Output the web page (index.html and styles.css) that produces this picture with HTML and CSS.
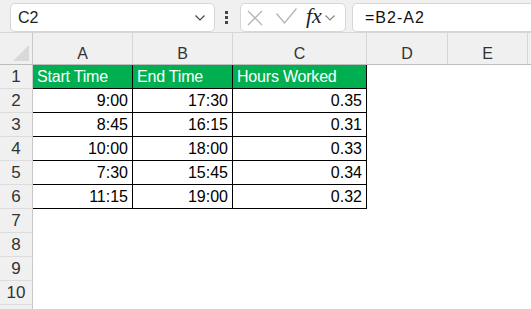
FILE: index.html
```html
<!DOCTYPE html>
<html lang="en">
<head>
    <meta charset="UTF-8">
    <title>Hours Worked</title>
    <link rel="stylesheet" href="styles.css">
</head>
<body>

    <!-- Name box and formula bar -->
    <div class="toolbar">
        <div class="namebox">
            <span>C2</span>
            <svg class="chev" width="10" height="6" viewBox="0 0 10 6"><path d="M0.5 0.5 L5 5 L9.5 0.5" fill="none" stroke="#444" stroke-width="1.2"/></svg>
        </div>
        <div class="grip"><span></span><span></span><span></span></div>
        <div class="fx-tools">
            <svg class="cancel" width="16" height="16" viewBox="0 0 16 16"><path d="M1 1 L15 15 M15 1 L1 15" stroke="#b4b4b4" stroke-width="1.3"/></svg>
            <svg class="enter" width="21" height="16" viewBox="0 0 21 16"><path d="M0.5 5.5 L8.5 15 L20.5 0.5" fill="none" stroke="#b4b4b4" stroke-width="1.3"/></svg>
            <span class="fx">fx</span>
            <svg class="chev" width="10" height="6" viewBox="0 0 10 6"><path d="M0.5 0.5 L5 5 L9.5 0.5" fill="none" stroke="#888" stroke-width="1.2"/></svg>
        </div>
        <div class="formula">=B2-A2</div>
    </div>

    <!-- Worksheet -->
    <div class="sheet">
        <div class="corner"><div class="triangle"></div></div>
        <div class="col-head">A</div>
        <div class="col-head">B</div>
        <div class="col-head">C</div>
        <div class="col-head">D</div>
        <div class="col-head">E</div>
        <div class="col-head last"></div>

        <div class="row-head">1</div>
        <div class="cell title">Start Time</div>
        <div class="cell title">End Time</div>
        <div class="cell title">Hours Worked</div>
        <div class="blank"></div><div class="blank"></div><div class="blank"></div>

        <div class="row-head">2</div>
        <div class="cell">9:00</div>
        <div class="cell">17:30</div>
        <div class="cell">0.35</div>
        <div class="blank"></div><div class="blank"></div><div class="blank"></div>

        <div class="row-head">3</div>
        <div class="cell">8:45</div>
        <div class="cell">16:15</div>
        <div class="cell">0.31</div>
        <div class="blank"></div><div class="blank"></div><div class="blank"></div>

        <div class="row-head">4</div>
        <div class="cell">10:00</div>
        <div class="cell">18:00</div>
        <div class="cell">0.33</div>
        <div class="blank"></div><div class="blank"></div><div class="blank"></div>

        <div class="row-head">5</div>
        <div class="cell">7:30</div>
        <div class="cell">15:45</div>
        <div class="cell">0.34</div>
        <div class="blank"></div><div class="blank"></div><div class="blank"></div>

        <div class="row-head">6</div>
        <div class="cell">11:15</div>
        <div class="cell">19:00</div>
        <div class="cell">0.32</div>
        <div class="blank"></div><div class="blank"></div><div class="blank"></div>

        <div class="row-head">7</div>
        <div class="blank"></div><div class="blank"></div><div class="blank"></div>
        <div class="blank"></div><div class="blank"></div><div class="blank"></div>

        <div class="row-head">8</div>
        <div class="blank"></div><div class="blank"></div><div class="blank"></div>
        <div class="blank"></div><div class="blank"></div><div class="blank"></div>

        <div class="row-head">9</div>
        <div class="blank"></div><div class="blank"></div><div class="blank"></div>
        <div class="blank"></div><div class="blank"></div><div class="blank"></div>

        <div class="row-head">10</div>
        <div class="blank"></div><div class="blank"></div><div class="blank"></div>
        <div class="blank"></div><div class="blank"></div><div class="blank"></div>

        <!-- next row peeks in at the bottom edge -->
        <div class="row-head"></div>
        <div class="blank"></div><div class="blank"></div><div class="blank"></div>
        <div class="blank"></div><div class="blank"></div><div class="blank"></div>
    </div>

</body>
</html>
```

FILE: styles.css
```css
body {
    margin: 0;
    font-family: 'Liberation Sans', Arial, sans-serif;
    background-color: #fff;
    overflow: hidden;
}

.toolbar {
    display: flex;
    align-items: center;
    height: 32px;
    padding: 3px 0 0 10px;
    box-sizing: border-box;
    background-color: #f0f0f0;
}

.namebox, .fx-tools, .formula {
    height: 29px;
    box-sizing: border-box;
    background-color: #fff;
    border: 1px solid #d6d6d6;
    border-radius: 5px;
    display: flex;
    align-items: center;
}

.namebox {
    width: 205px;
    padding: 0 9px 0 7px;
    justify-content: space-between;
    font-size: 16px;
    color: #222;
}

.grip {
    width: 27px;
    display: flex;
    flex-direction: column;
    align-items: center;
    gap: 2px;
    margin-left: -2px;
}

.grip span {
    width: 3px;
    height: 3px;
    background-color: #444;
}

.fx-tools {
    width: 106px;
    padding: 0 4px 0 6px;
}

.fx-tools .cancel {
    margin-right: 13px;
}

.fx-tools .enter {
    margin-top: -4px;
}

.fx-tools .fx {
    font-family: 'Liberation Serif', serif;
    font-style: italic;
    font-size: 22px;
    color: #222;
    margin: 0 3px 3px 9px;
}

.formula {
    flex: 1;
    margin-left: 6px;
    margin-right: -10px;
    padding-left: 12px;
    font-size: 16px;
    letter-spacing: 1px;
    color: #111;
}

.sheet {
    display: grid;
    grid-template-columns: 33px 100px 100px 134px 81px 80px 1fr;
    grid-template-rows: 33px repeat(10, 24px) 6px;
    font-size: 16px;
}

.corner, .col-head, .row-head {
    background-color: #f0f0f0;
    color: #333;
    box-sizing: border-box;
}

.corner {
    border-top: 1px solid #d6d6d6;
    border-right: 1px solid #c8c8c8;
    border-bottom: 1px solid #bdbdbd;
    display: flex;
    justify-content: flex-end;
    align-items: flex-end;
    padding: 0 3px 3px 0;
}

.triangle {
    width: 16px;
    height: 16px;
    background-color: #d9d9d9;
    clip-path: polygon(100% 0, 100% 100%, 0 100%);
}

.col-head {
    border-top: 1px solid #d6d6d6;
    border-right: 1px solid #d6d6d6;
    border-bottom: 1px solid #bdbdbd;
    display: flex;
    justify-content: center;
    align-items: center;
    padding-top: 10px;
}

.col-head.last {
    border-right: none;
}

.row-head {
    border-right: 1px solid #c8c8c8;
    border-bottom: 1px solid #dcdcdc;
    display: flex;
    justify-content: center;
    align-items: center;
    font-size: 17px;
}

.cell {
    box-sizing: border-box;
    border-right: 1px solid #000;
    border-bottom: 1px solid #000;
    padding: 0 4px;
    display: flex;
    align-items: center;
    justify-content: flex-end;
    color: #000;
}

.cell.title {
    background-color: #00b050;
    color: #fff;
    justify-content: flex-start;
    letter-spacing: -0.2px;
}
```
